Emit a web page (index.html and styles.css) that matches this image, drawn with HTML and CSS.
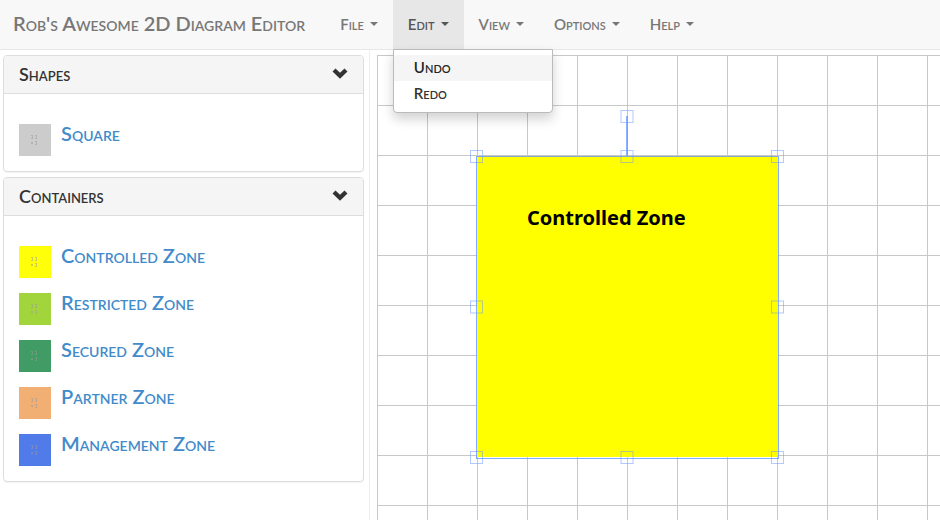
FILE: index.html
```html
<!DOCTYPE html>
<html lang="en">
<head>
<meta charset="utf-8">
<meta name="viewport" content="width=device-width, initial-scale=1">
<title>Rob's Awesome 2D Diagram Editor</title>
<link rel="stylesheet" href="styles.css">
</head>
<body>
<svg class="defs" aria-hidden="true">
  <symbol id="chevron" viewBox="0 0 16 12">
    <path d="M3.5 0.5 L8 4.7 L12.5 0.5 L15.5 3.5 L8 10.7 L0.5 3.5 Z" fill="#333"/>
  </symbol>
  <symbol id="dots" viewBox="0 0 6 10">
    <path d="M0 0h2v4h-2v-1h1v-2h-1z M4 0h2v4h-2v-1h1v-2h-1z M0 7h2v2h-2z M4 6h2v4h-2v-1h1v-2h-1z" fill="#999" fill-opacity=".5"/>
  </symbol>
</svg>
<header class="navbar">
  <a class="brand" href="#">Rob's Awesome 2D Diagram Editor</a>
  <nav class="menus">
    <div class="menu"><button class="menu-button" type="button">File<span class="caret"></span></button></div>
    <div class="menu">
      <button class="menu-button open" type="button" aria-expanded="true">Edit<span class="caret"></span></button>
      <div class="dropdown">
        <button class="dropdown-item active" type="button">Undo</button>
        <button class="dropdown-item" type="button">Redo</button>
      </div>
    </div>
    <div class="menu"><button class="menu-button" type="button">View<span class="caret"></span></button></div>
    <div class="menu"><button class="menu-button" type="button">Options<span class="caret"></span></button></div>
    <div class="menu"><button class="menu-button" type="button">Help<span class="caret"></span></button></div>
  </nav>
</header>
<main class="editor">
  <aside class="sidebar">
    <section class="panel">
      <button class="panel-heading" type="button">Shapes<svg class="chevron"><use href="#chevron"/></svg></button>
      <div class="panel-body">
        <a class="item" href="#"><span class="swatch gray"><svg class="dots"><use href="#dots"/></svg></span>Square</a>
      </div>
    </section>
    <section class="panel">
      <button class="panel-heading" type="button">Containers<svg class="chevron"><use href="#chevron"/></svg></button>
      <div class="panel-body">
        <a class="item" href="#"><span class="swatch yellow"><svg class="dots"><use href="#dots"/></svg></span>Controlled Zone</a>
        <a class="item" href="#"><span class="swatch lime"><svg class="dots"><use href="#dots"/></svg></span>Restricted Zone</a>
        <a class="item" href="#"><span class="swatch green"><svg class="dots"><use href="#dots"/></svg></span>Secured Zone</a>
        <a class="item" href="#"><span class="swatch orange"><svg class="dots"><use href="#dots"/></svg></span>Partner Zone</a>
        <a class="item" href="#"><span class="swatch blue"><svg class="dots"><use href="#dots"/></svg></span>Management Zone</a>
      </div>
    </section>
  </aside>
  <section class="canvas" aria-label="Diagram canvas">
    <div class="zone">
      <span class="zone-label">Controlled Zone</span>
      <svg class="selection" viewBox="0 0 314 354" fill="none" stroke="#6496ff" aria-hidden="true">
        <rect x="6.5" y="46.5" width="302" height="302" stroke-opacity=".8"/>
        <path d="M157 6V46" stroke-width="2" stroke-opacity=".75"/>
        <g stroke-opacity=".5">
          <rect x=".5" y="40.5" width="12" height="12"/>
          <rect x="151" y="40.5" width="12" height="12"/>
          <rect x="301.5" y="40.5" width="12" height="12"/>
          <rect x=".5" y="191" width="12" height="12"/>
          <rect x="301.5" y="191" width="12" height="12"/>
          <rect x=".5" y="341.5" width="12" height="12"/>
          <rect x="151" y="341.5" width="12" height="12"/>
          <rect x="301.5" y="341.5" width="12" height="12"/>
          <rect x="151" y=".5" width="12" height="12"/>
        </g>
      </svg>
    </div>
  </section>
</main>
</body>
</html>
```
FILE: styles.css
```css
* { box-sizing: border-box; }

body {
  margin: 0;
  min-height: 100vh;
  display: flex;
  flex-direction: column;
  overflow: hidden;
  background: #fff;
  color: #333;
  font-family: Lato, "Liberation Sans", sans-serif;
  font-variant: small-caps;
  font-weight: 600;
  font-size: 15px;
  line-height: 20px;
}

button {
  font: inherit;
  color: inherit;
  background: none;
  border: 0;
  cursor: pointer;
}

a { text-decoration: none; }

.defs { position: absolute; width: 0; height: 0; }

.navbar {
  display: flex;
  height: 50px;
  background: #f8f8f8;
  border-bottom: 1px solid #e7e7e7;
}

.brand {
  padding: 13px 20px 16px 13px;
  color: #777;
  font-size: 20px;
  white-space: nowrap;
}

.menus { display: flex; }

.menu { position: relative; }

.menu-button {
  display: flex;
  align-items: center;
  gap: 6px;
  height: 49px;
  padding: 0 15px 2px;
  color: #777;
}

.menu-button.open { background: #e7e7e7; color: #555; }

.caret {
  border: 4px solid transparent;
  border-top-color: currentColor;
  border-bottom: 0;
}

.dropdown {
  position: absolute;
  z-index: 2;
  top: 49px;
  left: 0;
  width: 160px;
  padding: 5px 0;
  background: #fff;
  border: 1px solid #bbb;
  border-radius: 0 0 4px 4px;
  box-shadow: 0 6px 12px rgba(0, 0, 0, .18);
}

.dropdown-item {
  display: block;
  width: 100%;
  height: 26px;
  padding: 0 20px 2px;
  text-align: left;
}

.dropdown-item.active { background: #f5f5f5; color: #262626; }

.editor { display: flex; flex: 1; }

.sidebar {
  flex: 0 0 370px;
  display: flex;
  flex-direction: column;
  gap: 5px;
  padding: 5px 5px 5px 3px;
  border-right: 1px solid #eee;
}

.panel {
  border: 1px solid #ddd;
  border-radius: 4px;
  box-shadow: 0 1px 1px rgba(0, 0, 0, .05);
}

.panel-heading {
  display: flex;
  align-items: center;
  justify-content: space-between;
  width: 100%;
  height: 38px;
  padding: 0 15px 2px;
  background: #f5f5f5;
  border-bottom: 1px solid #ddd;
  border-radius: 3px 3px 0 0;
  font-size: 18px;
}

.chevron { width: 16px; height: 12px; }

.panel-body {
  display: flex;
  flex-direction: column;
  gap: 15px;
  padding: 30px 15px 15px;
}

.item {
  display: flex;
  gap: 10px;
  color: #428bca;
  font-size: 20px;
  line-height: 18px;
}

.swatch { width: 32px; height: 32px; padding: 11px 12px; }
.dots { display: block; width: 6px; height: 10px; }

.gray { background: #ccc; }
.yellow { background: #ffff0a; }
.lime { background: #a2d43c; }
.green { background: #419b64; }
.orange { background: #f2af74; }
.blue { background: #507be8; }

.canvas {
  flex: 1;
  position: relative;
  margin: 5px 0 0 7px;
  background-image:
    linear-gradient(#c8c8c8 1px, transparent 1px),
    linear-gradient(90deg, #c8c8c8 1px, transparent 1px);
  background-size: 50px 50px;
}

.zone {
  position: absolute;
  left: 100px;
  top: 101px;
  width: 301px;
  height: 301px;
  padding: 50px;
  background: #ff0;
}

.zone-label {
  color: #000;
  font: bold 20px/24px "Noto Sans", sans-serif;
  white-space: nowrap;
}

.selection {
  position: absolute;
  left: -7px;
  top: -46px;
  width: 314px;
  height: 354px;
}
```
